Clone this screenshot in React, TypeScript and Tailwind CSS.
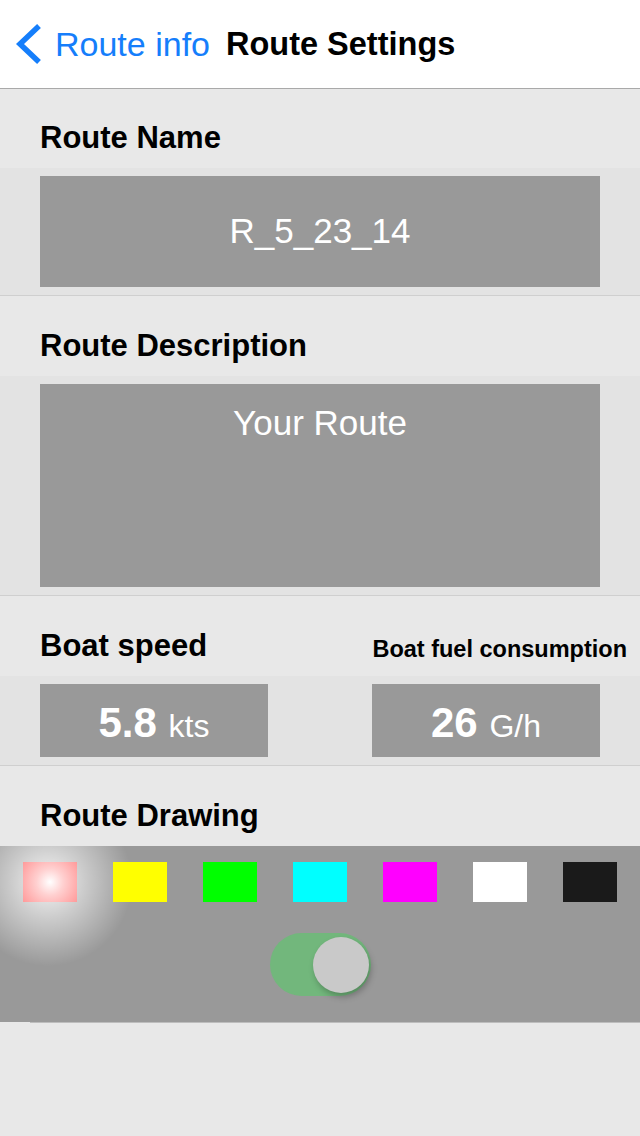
import React from "react";

const font = { fontFamily: '"Liberation Sans", Arial, sans-serif' };

function Label({ children }: { children: React.ReactNode }) {
  return (
    <div className="h-[80px] bg-[#e8e8e8] pl-[40px] pt-[32px]">
      <div className="text-[31px] font-bold leading-[36px] text-black">{children}</div>
    </div>
  );
}

export default function App() {
  const swatches = ["#ffff00", "#00ff00", "#00ffff", "#ff00ff", "#ffffff", "#1a1a1a"];
  return (
    <div className="w-[640px] min-h-[1136px] bg-[#e8e8e8]" style={font}>
      {/* Header */}
      <div className="flex h-[89px] items-center border-b border-[#a9a9a9] bg-white">
        <svg className="ml-[16px] h-[40px] w-[25px]" viewBox="0 0 25 40">
          <polyline points="23,2 4,20 23,38" fill="none" stroke="#157efb" strokeWidth="5.5" strokeLinejoin="miter" />
        </svg>
        <span className="ml-[14px] text-[34px] text-[#157efb]">Route info</span>
        <span className="ml-[16px] text-[32.5px] font-bold text-black">Route Settings</span>
      </div>

      {/* Route Name */}
      <div className="border-b border-[#cfcfcf]">
        <div className="h-[79px] bg-[#e8e8e8] pl-[40px] pt-[31px]">
          <div className="text-[31px] font-bold leading-[36px] text-black">Route Name</div>
        </div>
        <div className="bg-[#e3e3e3] px-[40px] py-[8px]">
          <div className="flex h-[111px] items-center justify-center bg-[#999999] text-[35px] text-white">
            R_5_23_14
          </div>
        </div>
      </div>

      {/* Route Description */}
      <div className="border-b border-[#cfcfcf]">
        <Label>Route Description</Label>
        <div className="bg-[#e3e3e3] px-[40px] py-[8px]">
          <div className="h-[203px] bg-[#999999] pt-[19px] text-center text-[35px] leading-[40px] text-white">
            Your Route
          </div>
        </div>
      </div>

      {/* Boat speed */}
      <div className="border-b border-[#cfcfcf]">
        <div className="flex h-[80px] items-start justify-between bg-[#e8e8e8] pl-[40px] pr-[13px] pt-[32px]">
          <div className="text-[31px] font-bold leading-[36px] text-black">Boat speed</div>
          <div className="pt-[6px] text-[23.5px] font-bold leading-[30px] text-black">Boat fuel consumption</div>
        </div>
        <div className="flex justify-between bg-[#e3e3e3] px-[40px] py-[8px]">
          <div className="flex h-[73px] w-[228px] items-center justify-center bg-[#999999] text-white">
            <div className="flex items-baseline pt-[4px]">
              <span className="text-[42px] font-bold leading-none">5.8&nbsp;</span>
              <span className="text-[32px] leading-none">kts</span>
            </div>
          </div>
          <div className="flex h-[73px] w-[228px] items-center justify-center bg-[#999999] text-white">
            <div className="flex items-baseline pt-[4px]">
              <span className="text-[42px] font-bold leading-none">26&nbsp;</span>
              <span className="text-[32px] leading-none">G/h</span>
            </div>
          </div>
        </div>
      </div>

      {/* Route Drawing */}
      <Label>Route Drawing</Label>
      <div className="relative h-[176px] overflow-hidden bg-[#999999]">
        <div className="pointer-events-none absolute left-[-37px] top-[-49px] h-[170px] w-[170px] rounded-full bg-[radial-gradient(circle,rgba(255,255,255,0.9)_0%,rgba(255,255,255,0.5)_30%,rgba(255,255,255,0)_70%)]" />
        <div className="relative flex justify-between px-[23px] pt-[16px]">
          <div className="h-[40px] w-[54px] bg-[radial-gradient(circle,#ffffff_0%,#ffd0d0_40%,#ff9a9a_100%)]" />
          {swatches.map((c) => (
            <div key={c} className="h-[40px] w-[54px]" style={{ backgroundColor: c }} />
          ))}
        </div>
        <div className="relative mx-auto mt-[31px] flex h-[63px] w-[101px] items-center justify-end rounded-full bg-[#72b77c] pr-[2px]">
          <div className="h-[56px] w-[56px] rounded-full bg-[#c9c9c9] shadow-[2px_4px_6px_rgba(0,0,0,0.25)]" />
        </div>
      </div>
      <div className="ml-[30px] h-px bg-[#bdbdbd]" />
    </div>
  );
}
